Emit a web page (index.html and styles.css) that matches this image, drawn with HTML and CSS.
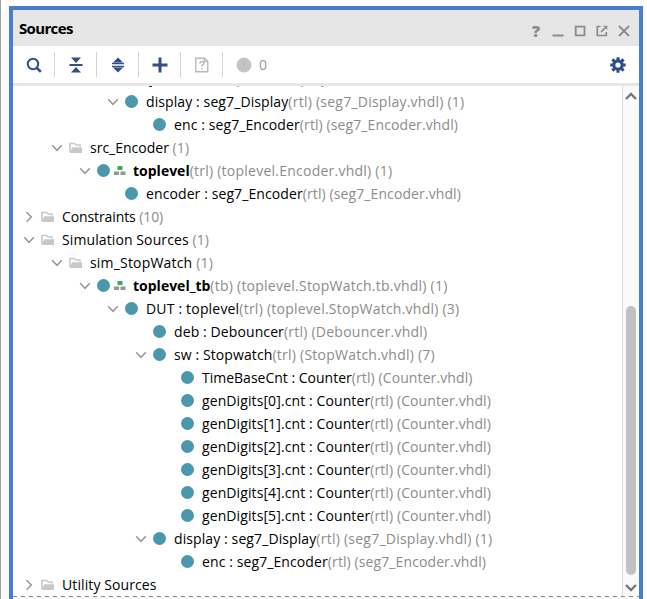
FILE: index.html
```html
<!DOCTYPE html>
<html lang="en">
<head>
<meta charset="utf-8">
<title>Sources</title>
<link rel="stylesheet" href="styles.css">
</head>
<body>
<svg class="defs" aria-hidden="true">
  <symbol id="down" viewBox="0 0 12 12"><path d="M1.2 3.3 6 8.3l4.8-5" fill="none" stroke="#969696" stroke-width="1.5"/></symbol>
  <symbol id="right" viewBox="0 0 12 12"><path d="M3.5 1.2 8.3 6l-4.8 4.8" fill="none" stroke="#969696" stroke-width="1.5"/></symbol>
  <symbol id="folder" viewBox="0 0 14 12"><path d="M1 10V1.5h4.5L7 3h4v1.5" fill="none" stroke="#c8c8c8" stroke-width="1.6"/><path d="M3.2 5.3H13V11H.8z" fill="#c8c8c8"/></symbol>
  <symbol id="top" viewBox="0 0 12 10"><path d="M3.5 0h5v4h-5z" fill="#35ae55"/><path d="M0 5.5h5V9H0zM6.5 5.5h5V9h-5z" fill="#96979b"/></symbol>
</svg>
<div class="panel">
  <header class="titlebar">
    <h1 class="title">Sources</h1>
    <div class="controls">
      <span class="help">?</span>
      <svg width="12" height="12"><path d="M.5 10.5h11" stroke="#8b8b8b" stroke-width="2"/></svg>
      <svg width="12" height="12"><path d="M1.7 1.7h8.8v8.6H1.7z" fill="none" stroke="#8b8b8b" stroke-width="1.8"/></svg>
      <svg width="12" height="12"><path d="M4.5 1.5H1.3v9h9V7" fill="none" stroke="#8b8b8b" stroke-width="1.7"/><path d="M5.2 6.8 9 3" stroke="#8b8b8b" stroke-width="1.7"/><path d="M7 .7h4.3V5z" fill="#8b8b8b"/></svg>
      <svg width="12" height="12"><path d="m1 1 10 10M11 1 1 11" stroke="#8b8b8b" stroke-width="1.8"/></svg>
    </div>
  </header>
  <div class="toolbar">
    <span class="tool"><svg width="16" height="16"><circle cx="7" cy="7" r="5.2" fill="none" stroke="#2f4f88" stroke-width="2"/><path d="m10.8 10.8 4 4" stroke="#2f4f88" stroke-width="2.6"/></svg></span>
    <span class="tool"><svg width="14" height="16"><path d="M2 .5h10L7 6zM2 15.5h10L7 10z" fill="#2f4f88"/><path d="M.5 8h13" stroke="#2f4f88" stroke-width="2"/></svg></span>
    <span class="tool"><svg width="14" height="16"><path d="M2 5.5h10L7 .5zM2 10.5h10L7 15.5z" fill="#2f4f88"/><path d="M1 6.5h12M1 9.5h12" stroke="#2f4f88" stroke-width="1.5"/></svg></span>
    <span class="tool"><svg width="16" height="16"><path d="M8 .5v15M.5 8h15" stroke="#2f4f88" stroke-width="3"/></svg></span>
    <span class="tool"><svg width="14" height="16"><path d="M.8 1.2h8.7l3.3 3.2v10.4h-12zM9.3 1.2v3.4h3.5" fill="none" stroke="#b9b9b9" stroke-width="1.4"/><path d="M4.9 6.7c0-3 4-2.6 4-.3 0 1.5-2 1.4-2 3.2M6.9 11v1.5" fill="none" stroke="#b9b9b9" stroke-width="1.5"/></svg></span>
    <span class="status"><svg width="16" height="16"><circle cx="8" cy="8" r="7.5" fill="#c4c4c4"/><path d="M8 4v5M8 10.5V12" stroke="#b9b9b9" stroke-width="1.5"/></svg><span>0</span></span>
    <svg class="gear" width="16" height="16" viewBox="0 0 16 16"><circle cx="8" cy="8" r="4.2" fill="none" stroke="#2f4f88" stroke-width="3.2"/><path d="M8 .3v3M8 12.7v3M.3 8h3M12.7 8h3M2.4 2.4l2 2M11.6 11.6l2 2M13.6 2.4l-2 2M4.4 11.6l-2 2" stroke="#2f4f88" stroke-width="3"/></svg>
  </div>
  <div class="body">
    <ul class="tree">
      <li class="cutoff"><svg width="320" height="1"><path d="M126 .5h3" stroke="#333"/><path d="M214 .5h2M278 .5h2M298 .5h3" stroke="#aaa"/></svg></li>
      <li class="row l3"><svg class="arrow"><use href="#down"/></svg><i class="dot"></i><span class="label loose">display : seg7_Display<em>(rtl) (seg7_Display.vhdl) (1)</em></span></li>
      <li class="row l4"><i class="arrow"></i><i class="dot"></i><span class="label">enc : seg7_Encoder<em>(rtl) (seg7_Encoder.vhdl)</em></span></li>
      <li class="row l1"><svg class="arrow"><use href="#down"/></svg><svg class="folder"><use href="#folder"/></svg><span class="label plain">src_Encoder<em> (1)</em></span></li>
      <li class="row l2"><svg class="arrow"><use href="#down"/></svg><i class="dot"></i><svg class="top"><use href="#top"/></svg><span class="label loose"><b>toplevel</b><em>(trl) (toplevel.Encoder.vhdl) (1)</em></span></li>
      <li class="row l3"><i class="arrow"></i><i class="dot"></i><span class="label">encoder : seg7_Encoder<em>(rtl) (seg7_Encoder.vhdl)</em></span></li>
      <li class="row l0"><svg class="arrow"><use href="#right"/></svg><svg class="folder"><use href="#folder"/></svg><span class="label tight">Constraints<em> (10)</em></span></li>
      <li class="row l0"><svg class="arrow"><use href="#down"/></svg><svg class="folder"><use href="#folder"/></svg><span class="label">Simulation Sources<em> (1)</em></span></li>
      <li class="row l1"><svg class="arrow"><use href="#down"/></svg><svg class="folder"><use href="#folder"/></svg><span class="label wide">sim_StopWatch<em> (1)</em></span></li>
      <li class="row l2"><svg class="arrow"><use href="#down"/></svg><i class="dot"></i><svg class="top"><use href="#top"/></svg><span class="label loose"><b>toplevel_tb</b><em>(tb) (toplevel.StopWatch.tb.vhdl) (1)</em></span></li>
      <li class="row l3"><svg class="arrow"><use href="#down"/></svg><i class="dot"></i><span class="label wide">DUT : toplevel<em>(trl) (toplevel.StopWatch.vhdl) (3)</em></span></li>
      <li class="row l4"><i class="arrow"></i><i class="dot"></i><span class="label loose">deb : Debouncer<em>(rtl) (Debouncer.vhdl)</em></span></li>
      <li class="row l4"><svg class="arrow"><use href="#down"/></svg><i class="dot"></i><span class="label loose">sw : Stopwatch<em>(trl) (StopWatch.vhdl) (7)</em></span></li>
      <li class="row l5"><i class="arrow"></i><i class="dot"></i><span class="label plain">TimeBaseCnt : Counter<em>(rtl) (Counter.vhdl)</em></span></li>
      <li class="row l5"><i class="arrow"></i><i class="dot"></i><span class="label">genDigits[0].cnt : Counter<em>(rtl) (Counter.vhdl)</em></span></li>
      <li class="row l5"><i class="arrow"></i><i class="dot"></i><span class="label">genDigits[1].cnt : Counter<em>(rtl) (Counter.vhdl)</em></span></li>
      <li class="row l5"><i class="arrow"></i><i class="dot"></i><span class="label">genDigits[2].cnt : Counter<em>(rtl) (Counter.vhdl)</em></span></li>
      <li class="row l5"><i class="arrow"></i><i class="dot"></i><span class="label">genDigits[3].cnt : Counter<em>(rtl) (Counter.vhdl)</em></span></li>
      <li class="row l5"><i class="arrow"></i><i class="dot"></i><span class="label">genDigits[4].cnt : Counter<em>(rtl) (Counter.vhdl)</em></span></li>
      <li class="row l5"><i class="arrow"></i><i class="dot"></i><span class="label">genDigits[5].cnt : Counter<em>(rtl) (Counter.vhdl)</em></span></li>
      <li class="row l4"><svg class="arrow"><use href="#down"/></svg><i class="dot"></i><span class="label loose">display : seg7_Display<em>(rtl) (seg7_Display.vhdl) (1)</em></span></li>
      <li class="row l5"><i class="arrow"></i><i class="dot"></i><span class="label">enc : seg7_Encoder<em>(rtl) (seg7_Encoder.vhdl)</em></span></li>
      <li class="row l0"><svg class="arrow"><use href="#right"/></svg><svg class="folder"><use href="#folder"/></svg><span class="label">Utility Sources</span></li>
    </ul>
    <div class="scrollbar">
      <svg width="14" height="10"><path d="m2 8 5-5 5 5" fill="none" stroke="#777" stroke-width="2.4"/></svg>
      <div class="thumb"></div>
      <svg width="14" height="10"><path d="m2 2 5 5 5-5" fill="none" stroke="#777" stroke-width="2.4"/></svg>
    </div>
  </div>
  <svg class="edge" width="626" height="3"><path d="M0 .5h626" stroke="#8c8c8c" stroke-dasharray="4 4"/></svg>
</div>
</body>
</html>
```
FILE: styles.css
```css
* { box-sizing: border-box; }
body { margin: 0; width: 647px; height: 599px; overflow: hidden; padding: 6px 0 0 8px; border-left: 1px solid #a0a0a0; background: #fff; font-family: "Open Sans", "Noto Sans", sans-serif; font-size: 14px; color: #000; }
.defs { display: none; }
.panel { width: 634px; height: 593px; border: 4px solid #497dce; border-bottom: 0; display: flex; flex-direction: column; }
.titlebar { height: 36px; flex: none; background: #e6e6e6; display: flex; align-items: center; justify-content: space-between; padding: 0 9px 0 6px; }
.title { margin: 0; font-size: 15px; font-weight: 700; letter-spacing: -.65px; }
.controls { display: flex; align-items: center; gap: 10px; padding-top: 5px; }
.help { width: 12px; font: 800 16px/12px "Open Sans", sans-serif; color: #8b8b8b; text-align: center; }
.toolbar { height: 40px; flex: none; display: flex; align-items: center; border-bottom: 3px solid #e6e6e6; }
.tool { width: 42px; height: 25px; display: flex; align-items: center; justify-content: center; border-right: 1px solid #d3d3d3; }
.status { display: flex; align-items: center; gap: 7px; margin-left: 13px; color: #999; }
.gear { margin: 0 13px 0 auto; }
.body { flex: 1; min-height: 0; display: flex; }
.tree { flex: 1; min-width: 0; margin: 0; padding: 0 0 0 10px; list-style: none; overflow: hidden; }
.cutoff { height: 4px; display: flex; align-items: flex-start; }
.row { height: 23px; display: flex; align-items: center; white-space: pre; }
.l1 { padding-left: 28px; }
.l2 { padding-left: 56px; }
.l3 { padding-left: 84px; }
.l4 { padding-left: 112px; }
.l5 { padding-left: 140px; }
.arrow { width: 12px; height: 12px; margin-right: 6px; flex: none; }
.dot { width: 13px; height: 13px; border-radius: 50%; background: #4b97ae; margin-right: 8px; flex: none; }
.folder { width: 14px; height: 12px; margin-right: 7px; flex: none; }
.top { width: 12px; height: 10px; margin: 0 7px 0 -4px; flex: none; }
.label { letter-spacing: .1px; }
.label b { letter-spacing: 0; }
.label em { font-style: normal; color: #8c8c8c; }
.loose em, .wide em { letter-spacing: .24px; }
.wide { letter-spacing: .18px; }
.plain { letter-spacing: 0; }
.plain em { letter-spacing: .1px; }
.tight { letter-spacing: -.1px; }
.scrollbar { width: 17px; flex: none; border-left: 1px solid #dcdcdc; background: #fafafa; display: flex; flex-direction: column; align-items: center; justify-content: space-between; padding: 5px 0 3px; }
.thumb { width: 10px; height: 269px; margin-top: 196px; border-radius: 5px; background: #c1c1c1; }
.edge { display: block; flex: none; background: #fafafa; }
```
